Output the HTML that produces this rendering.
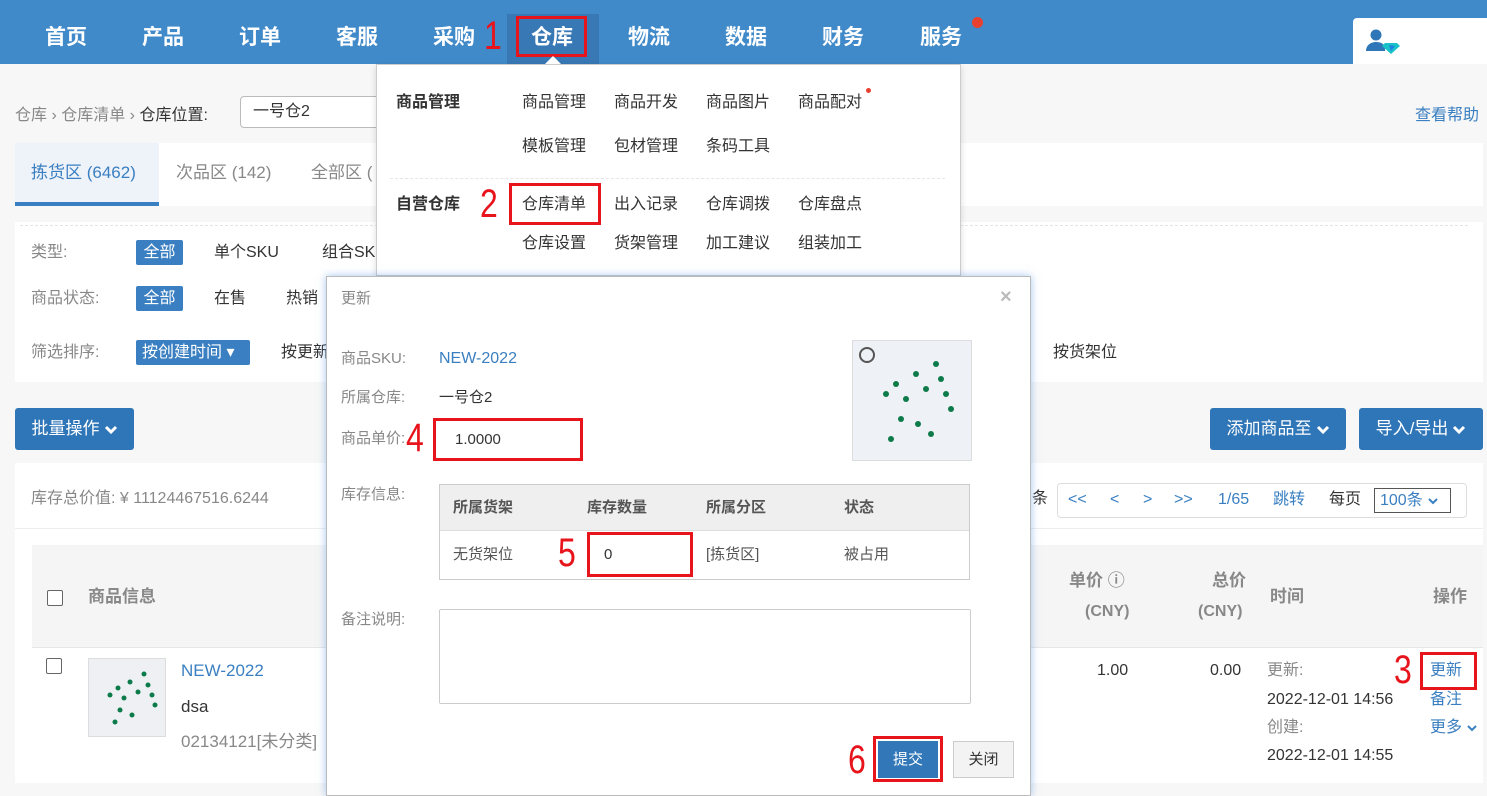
<!DOCTYPE html>
<html><head><meta charset="utf-8"><style>
*{margin:0;padding:0;box-sizing:border-box}
body{width:1487px;height:783px;overflow:hidden;background:#f7f7f7;font-family:"Liberation Sans","Noto Sans CJK SC",sans-serif;font-size:16px;color:#333;position:relative;line-height:1.1}
.a{position:absolute;white-space:nowrap}
.nav{left:0;top:0;width:1487px;height:64px;background:#418ac9}
.ni{top:26px;color:#fff;font-size:21px;font-weight:bold}
.red{color:#e8141c;font-family:"Liberation Sans",sans-serif;font-size:40px;line-height:40px;transform:scaleX(.8);transform-origin:left}
.rb{border:3px solid #e8141c}
.box{background:#fff}
.g{color:#888}
.lk{color:#3a7fc1}
.btn{background:#2f76b8;color:#fff;border-radius:3px;font-size:17px;text-align:center;line-height:42px}
.chk{width:16px;height:16px;border:1px solid #666;border-radius:2px;background:#fff}
.mi{font-size:16px;color:#333}
.cv{display:inline-block;vertical-align:middle;margin-left:4px}
</style></head><body>
<div class="a nav"></div>
<div class="a" style="left:507px;top:14px;width:92px;height:50px;background:#3878b5"></div>
<div class="a ni" style="left:45px">首页</div>
<div class="a ni" style="left:142px">产品</div>
<div class="a ni" style="left:239px">订单</div>
<div class="a ni" style="left:336px">客服</div>
<div class="a ni" style="left:433px">采购</div>
<div class="a red" style="left:484px;top:16px">1</div>
<div class="a rb" style="left:516px;top:16px;width:71px;height:41px"></div>
<div class="a ni" style="left:531px">仓库</div>
<div class="a ni" style="left:628px">物流</div>
<div class="a ni" style="left:725px">数据</div>
<div class="a ni" style="left:822px">财务</div>
<div class="a ni" style="left:920px">服务</div>
<div class="a" style="left:972px;top:17px;width:11px;height:11px;border-radius:50%;background:#e8412f"></div>
<div class="a" style="left:1353px;top:18px;width:134px;height:46px;background:#fff;border-radius:4px 0 0 0"></div>
<svg class="a" style="left:1363px;top:28px" width="40" height="28" viewBox="0 0 40 28"><circle cx="13" cy="7" r="5.5" fill="#2f76b8"/><path d="M3 23c0-6 5-9 10-9s8 2 9 5v4z" fill="#2f76b8"/><path d="M22 15h12l3 3-9 8-9-8z" fill="#19c2c9"/><path d="M26 17l2 6 4-5" fill="#1f7fe0"/></svg>

<div class="a g" style="left:15px;top:107px;font-size:16px">仓库 › 仓库清单 › <span style="color:#333">仓库位置:</span></div>
<div class="a" style="left:240px;top:96px;width:150px;height:32px;border:1px solid #bbb;border-radius:4px;background:#fff;padding:6px 12px;font-size:16px">一号仓2</div>
<div class="a lk" style="left:1415px;top:107px">查看帮助</div>

<div class="a box" style="left:15px;top:143px;width:1468px;height:63px"></div>
<div class="a" style="left:15px;top:143px;width:144px;height:63px;background:#eef2f9;border-bottom:4px solid #3a7fc1"></div>
<div class="a lk" style="left:31px;top:164px;font-size:17px">拣货区 (6462)</div>
<div class="a g" style="left:176px;top:164px;font-size:17px">次品区 (142)</div>
<div class="a g" style="left:311px;top:164px;font-size:17px">全部区 (</div>

<div class="a box" style="left:15px;top:222px;width:1468px;height:160px"></div>
<div class="a" style="left:20px;top:225px;width:1448px;border-top:1px dashed #e4e4e4"></div>
<div class="a g" style="left:31px;top:244px">类型:</div>
<div class="a" style="left:136px;top:240px;width:47px;height:25px;background:#3a7fc1;color:#fff;text-align:center;line-height:25px;border-radius:2px">全部</div>
<div class="a" style="left:214px;top:244px">单个SKU</div>
<div class="a" style="left:322px;top:244px">组合SK</div>
<div class="a g" style="left:31px;top:290px">商品状态:</div>
<div class="a" style="left:136px;top:286px;width:47px;height:25px;background:#3a7fc1;color:#fff;text-align:center;line-height:25px;border-radius:2px">全部</div>
<div class="a" style="left:214px;top:290px">在售</div>
<div class="a" style="left:286px;top:290px">热销</div>
<div class="a g" style="left:31px;top:344px">筛选排序:</div>
<div class="a" style="left:136px;top:340px;width:114px;height:25px;background:#3a7fc1;color:#fff;line-height:25px;padding-left:6px;border-radius:2px">按创建时间 ▾</div>
<div class="a" style="left:281px;top:344px">按更新</div>
<div class="a" style="left:1053px;top:344px">按货架位</div>

<div class="a btn" style="left:15px;top:408px;width:119px">批量操作<svg class="cv" width="14" height="10"><path d="M2 2l5 5 5-5" stroke="#fff" stroke-width="3" fill="none"/></svg></div>
<div class="a btn" style="left:1210px;top:408px;width:136px">添加商品至<svg class="cv" width="14" height="10"><path d="M2 2l5 5 5-5" stroke="#fff" stroke-width="3" fill="none"/></svg></div>
<div class="a btn" style="left:1359px;top:408px;width:124px">导入/导出<svg class="cv" width="14" height="10"><path d="M2 2l5 5 5-5" stroke="#fff" stroke-width="3" fill="none"/></svg></div>

<div class="a box" style="left:15px;top:463px;width:1468px;height:320px"></div>
<div class="a g" style="left:31px;top:490px">库存总价值: ¥ 11124467516.6244</div>
<div class="a" style="left:15px;top:528px;width:1468px;border-top:1px solid #eee"></div>
<div class="a" style="left:1032px;top:490px">条</div>
<div class="a" style="left:1057px;top:483px;width:410px;height:35px;border:1px solid #ddd;border-radius:4px;background:#fff"></div>
<div class="a lk" style="left:1068px;top:491px">&lt;&lt;</div>
<div class="a lk" style="left:1110px;top:491px">&lt;</div>
<div class="a lk" style="left:1143px;top:491px">&gt;</div>
<div class="a lk" style="left:1174px;top:491px">&gt;&gt;</div>
<div class="a lk" style="left:1218px;top:491px">1/65</div>
<div class="a lk" style="left:1273px;top:491px">跳转</div>
<div class="a" style="left:1329px;top:491px">每页</div>
<div class="a lk" style="left:1374px;top:488px;width:77px;height:25px;border:1px solid #555;padding:3px 5px">100条<svg class="cv" width="12" height="8"><path d="M2 2l4 4 4-4" stroke="#3a7fc1" stroke-width="2" fill="none"/></svg></div>

<div class="a" style="left:32px;top:545px;width:1451px;height:103px;background:#f5f5f5;border-bottom:1px solid #e6e6e6"></div>
<div class="a chk" style="left:47px;top:590px"></div>
<div class="a g" style="left:88px;top:588px;font-weight:bold;font-size:17px">商品信息</div>
<div class="a g" style="left:1069px;top:572px;font-weight:bold;font-size:17px">单价 ⓘ</div>
<div class="a g" style="left:1085px;top:603px;font-weight:bold;font-size:16px">(CNY)</div>
<div class="a g" style="left:1212px;top:572px;font-weight:bold;font-size:17px">总价</div>
<div class="a g" style="left:1198px;top:603px;font-weight:bold;font-size:16px">(CNY)</div>
<div class="a g" style="left:1270px;top:588px;font-weight:bold;font-size:17px">时间</div>
<div class="a g" style="left:1433px;top:588px;font-weight:bold;font-size:17px">操作</div>
<div class="a chk" style="left:46px;top:658px"></div>
<div class="a" style="left:88px;top:658px;width:78px;height:79px;border:1px solid #ddd;background:#eef0f3"></div>
<svg class="a" style="left:90px;top:660px" width="74" height="75"><g fill="#0d7a4a"><circle cx="20" cy="35" r="2.5"/><circle cx="28" cy="28" r="2.5"/><circle cx="34" cy="38" r="2.5"/><circle cx="40" cy="22" r="2.5"/><circle cx="48" cy="32" r="2.5"/><circle cx="42" cy="55" r="2.5"/><circle cx="54" cy="14" r="2.5"/><circle cx="58" cy="25" r="2.5"/><circle cx="62" cy="35" r="2.5"/><circle cx="65" cy="45" r="2.5"/><circle cx="30" cy="50" r="2.5"/><circle cx="25" cy="62" r="2.5"/></g></svg>
<div class="a lk" style="left:181px;top:662px;font-size:17px">NEW-2022</div>
<div class="a" style="left:181px;top:698px;font-size:17px">dsa</div>
<div class="a g" style="left:181px;top:733px;font-size:17px">02134121[未分类]</div>
<div class="a" style="left:1097px;top:662px">1.00</div>
<div class="a" style="left:1210px;top:662px">0.00</div>
<div class="a g" style="left:1267px;top:662px">更新:</div>
<div class="a" style="left:1267px;top:691px">2022-12-01 14:56</div>
<div class="a g" style="left:1267px;top:719px">创建:</div>
<div class="a" style="left:1267px;top:747px">2022-12-01 14:55</div>
<div class="a red" style="left:1394px;top:650px">3</div>
<div class="a rb" style="left:1420px;top:652px;width:57px;height:38px"></div>
<div class="a lk" style="left:1430px;top:662px">更新</div>
<div class="a lk" style="left:1430px;top:691px">备注</div>
<div class="a lk" style="left:1430px;top:719px">更多<svg class="cv" width="12" height="8"><path d="M2 2l4 4 4-4" stroke="#3a7fc1" stroke-width="2" fill="none"/></svg></div>

<!-- dropdown -->
<div class="a box" style="left:376px;top:64px;width:585px;height:212px;border:1px solid #ccc;box-shadow:0 2px 6px rgba(0,0,0,.15)"></div>
<div class="a" style="left:545px;top:48px;width:0;height:0;border:8px solid transparent;border-bottom-color:#fff"></div>
<div class="a" style="left:396px;top:94px;font-weight:bold">商品管理</div>
<div class="a mi" style="left:522px;top:94px">商品管理</div>
<div class="a mi" style="left:614px;top:94px">商品开发</div>
<div class="a mi" style="left:706px;top:94px">商品图片</div>
<div class="a mi" style="left:798px;top:94px">商品配对</div>
<div class="a" style="left:866px;top:88px;width:5px;height:5px;border-radius:50%;background:#e8412f"></div>
<div class="a mi" style="left:522px;top:138px">模板管理</div>
<div class="a mi" style="left:614px;top:138px">包材管理</div>
<div class="a mi" style="left:706px;top:138px">条码工具</div>
<div class="a" style="left:390px;top:178px;width:555px;border-top:1px dashed #e6e6e6"></div>
<div class="a" style="left:396px;top:196px;font-weight:bold">自营仓库</div>
<div class="a red" style="left:480px;top:184px">2</div>
<div class="a rb" style="left:509px;top:183px;width:92px;height:42px"></div>
<div class="a mi" style="left:522px;top:196px">仓库清单</div>
<div class="a mi" style="left:614px;top:196px">出入记录</div>
<div class="a mi" style="left:706px;top:196px">仓库调拨</div>
<div class="a mi" style="left:798px;top:196px">仓库盘点</div>
<div class="a mi" style="left:522px;top:235px">仓库设置</div>
<div class="a mi" style="left:614px;top:235px">货架管理</div>
<div class="a mi" style="left:706px;top:235px">加工建议</div>
<div class="a mi" style="left:798px;top:235px">组装加工</div>

<!-- modal -->
<div class="a box" style="left:326px;top:276px;width:705px;height:520px;border:1px solid #bbb;box-shadow:0 0 8px rgba(90,150,230,.55)"></div>
<div class="a g" style="left:341px;top:291px;font-size:15px">更新</div>
<div class="a" style="left:1000px;top:286px;color:#bbb;font-size:20px;font-weight:bold">×</div>
<div class="a g" style="left:341px;top:351px;font-size:15px">商品SKU:</div>
<div class="a lk" style="left:439px;top:350px;font-size:16px">NEW-2022</div>
<div class="a g" style="left:341px;top:390px;font-size:15px">所属仓库:</div>
<div class="a" style="left:439px;top:390px;font-size:15px">一号仓2</div>
<div class="a g" style="left:341px;top:431px;font-size:15px">商品单价:</div>
<div class="a red" style="left:406px;top:418px">4</div>
<div class="a rb" style="left:433px;top:418px;width:150px;height:43px"></div>
<div class="a" style="left:455px;top:432px;font-size:15px">1.0000</div>
<div class="a" style="left:852px;top:340px;width:120px;height:121px;border:1px solid #ddd;background:#eef1f5"></div>
<svg class="a" style="left:856px;top:344px" width="112" height="112"><circle cx="11" cy="11" r="7" fill="none" stroke="#555" stroke-width="2"/><g fill="#0d7a4a"><circle cx="30" cy="50" r="3"/><circle cx="40" cy="40" r="3"/><circle cx="50" cy="55" r="3"/><circle cx="60" cy="30" r="3"/><circle cx="70" cy="45" r="3"/><circle cx="62" cy="80" r="3"/><circle cx="80" cy="20" r="3"/><circle cx="85" cy="35" r="3"/><circle cx="90" cy="50" r="3"/><circle cx="95" cy="65" r="3"/><circle cx="75" cy="90" r="3"/><circle cx="45" cy="75" r="3"/><circle cx="35" cy="95" r="3"/></g></svg>
<div class="a g" style="left:341px;top:487px;font-size:15px">库存信息:</div>
<div class="a" style="left:439px;top:484px;width:531px;height:96px;border:1px solid #ccc;background:#fff"></div>
<div class="a" style="left:440px;top:485px;width:529px;height:46px;background:#efefef;border-bottom:1px solid #ddd"></div>
<div class="a" style="left:453px;top:500px;font-weight:bold;font-size:15px;color:#555">所属货架</div>
<div class="a" style="left:587px;top:500px;font-weight:bold;font-size:15px;color:#555">库存数量</div>
<div class="a" style="left:706px;top:500px;font-weight:bold;font-size:15px;color:#555">所属分区</div>
<div class="a" style="left:844px;top:500px;font-weight:bold;font-size:15px;color:#555">状态</div>
<div class="a" style="left:453px;top:547px;font-size:15px;color:#555">无货架位</div>
<div class="a red" style="left:558px;top:533px">5</div>
<div class="a rb" style="left:587px;top:532px;width:106px;height:45px"></div>
<div class="a" style="left:604px;top:547px;font-size:15px">0</div>
<div class="a" style="left:706px;top:547px;font-size:15px;color:#555">[拣货区]</div>
<div class="a" style="left:844px;top:547px;font-size:15px;color:#555">被占用</div>
<div class="a g" style="left:341px;top:612px;font-size:15px">备注说明:</div>
<div class="a" style="left:439px;top:609px;width:532px;height:95px;border:1px solid #ccc;border-radius:2px"></div>
<div class="a red" style="left:848px;top:740px">6</div>
<div class="a rb" style="left:873px;top:736px;width:70px;height:46px"></div>
<div class="a" style="left:878px;top:741px;width:60px;height:37px;background:#3278b8;color:#fff;text-align:center;line-height:37px;font-size:15px">提交</div>
<div class="a" style="left:953px;top:741px;width:61px;height:37px;border:1px solid #ccc;background:#f3f3f3;text-align:center;line-height:35px;font-size:15px">关闭</div>
</body></html>
